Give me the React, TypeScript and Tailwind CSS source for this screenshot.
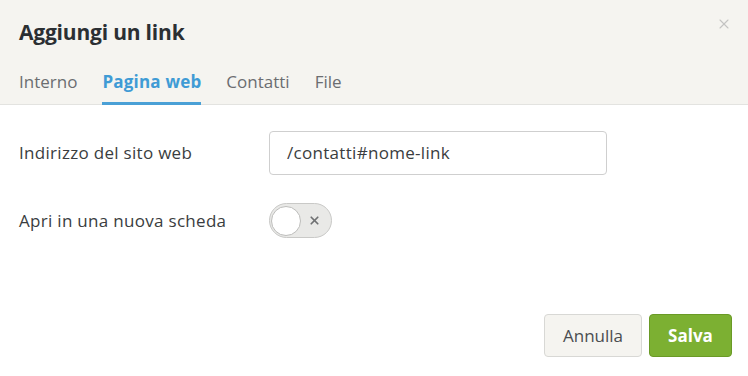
import { X } from "lucide-react";

const tabs = ["Interno", "Pagina web", "Contatti", "File"];

const App = () => {
  return (
    <div className="w-[748px] h-[376px] bg-white font-['Open_Sans',sans-serif] text-[#2d3136] overflow-hidden">
      <div className="bg-[#f5f4f0] border-b border-[#e3e3e0] px-[19px] relative">
        <h1 className="pt-[18px] text-[21px] font-bold leading-[28px] tracking-[-0.2px] text-[#2b2f33]">
          Aggiungi un link
        </h1>
        <button className="absolute right-[16px] top-[16px] text-[#c4c4c2]">
          <X size={16} strokeWidth={1.6} />
        </button>
        <div className="flex gap-[25px] mt-[24px] -mb-[1px]">
          {tabs.map((t) => (
            <div
              key={t}
              className={
                t === "Pagina web"
                  ? "text-[17px] font-bold tracking-[0.2px] text-[#3f9bd5] border-b-[3px] border-[#4aa0d6] pb-[8px] leading-[24px]"
                  : "text-[17px] text-[#6b6d70] pb-[11px] leading-[24px]"
              }
            >
              {t}
            </div>
          ))}
        </div>
      </div>

      <div className="px-[19px] pt-[26px] text-[17px] tracking-[0.3px] text-[#3a3d40]">
        <div className="flex items-center">
          <label className="w-[250px]">Indirizzo del sito web</label>
          <div className="w-[338px] h-[44px] border border-[#cfcfcf] rounded-[4px] flex items-center px-[17px]">
            /contatti#nome-link
          </div>
        </div>
        <div className="flex items-center mt-[28px]">
          <label className="w-[250px]">Apri in una nuova scheda</label>
          <div className="w-[63px] h-[35px] rounded-full bg-[#e9e9e7] border border-[#c9c9c7] flex items-center px-[1px]">
            <div className="w-[30px] h-[30px] rounded-full bg-white border border-[#bdbdbb]" />
            <X size={13} strokeWidth={3.2} className="ml-[7px] text-[#6f7173]" />
          </div>
        </div>
      </div>

      <div className="flex justify-end gap-[7px] pr-[16px] mt-[76px] text-[17px]">
        <button className="w-[98px] h-[43px] rounded-[4px] border border-[#d8d8d5] bg-[#f5f4f0] text-[#4a4d50]">
          Annulla
        </button>
        <button className="w-[83px] h-[43px] rounded-[4px] border border-[#6a9a26] bg-[#7cb032] font-bold text-white">
          Salva
        </button>
      </div>
    </div>
  );
};

export default App;
